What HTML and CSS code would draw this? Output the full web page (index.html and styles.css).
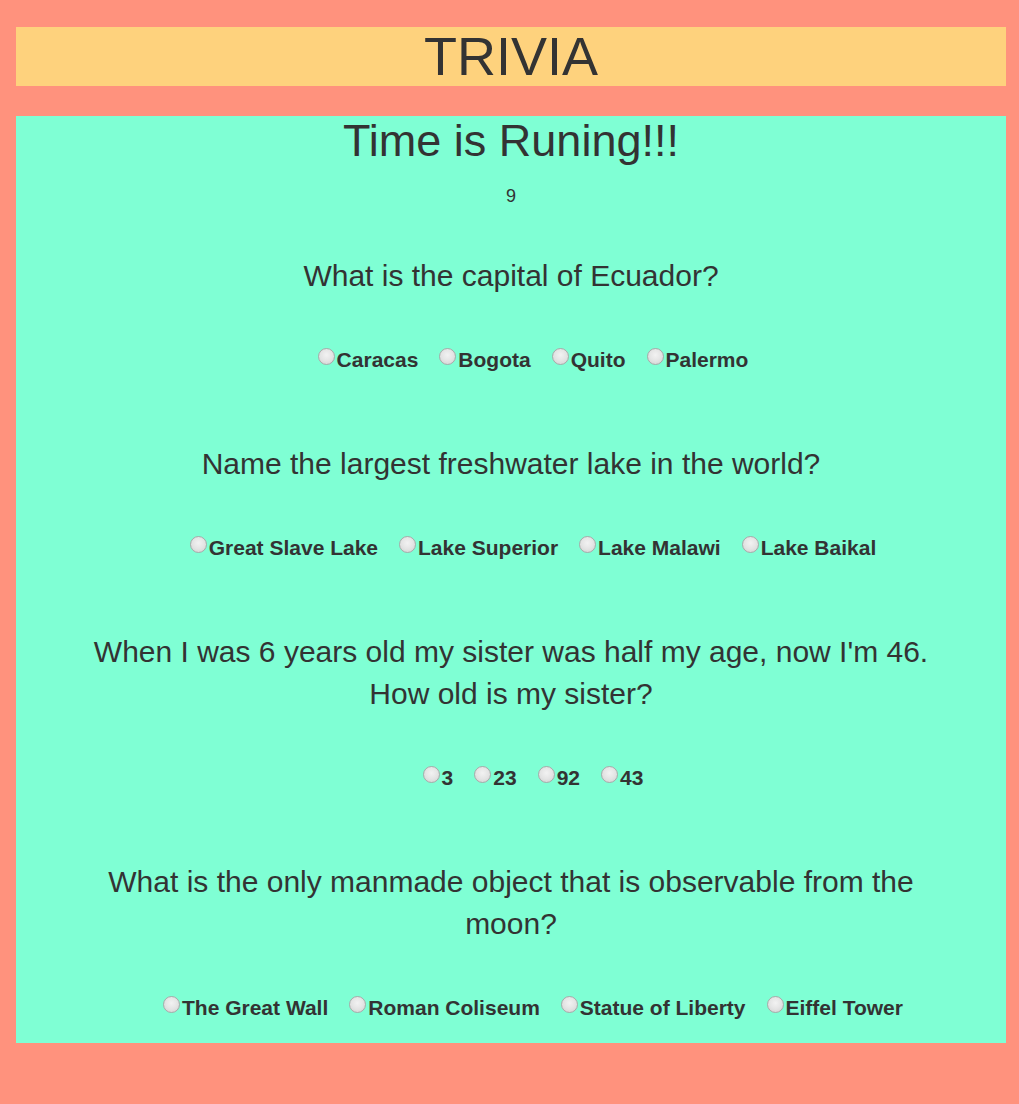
FILE: index.html
```html
<!DOCTYPE html>
<html lang="en">
<head>
<meta charset="utf-8">
<title>Trivia</title>
<link rel="stylesheet" href="styles.css">
</head>
<body>
<header class="banner">TRIVIA</header>
<main class="game">
  <h2 class="game-title">Time is Runing!!!</h2>
  <div class="timer">9</div>

  <section class="question">
    <p class="question-text">What is the capital of Ecuador?</p>
    <div class="options">
      <label class="option"><input type="radio" name="q1"><span>Caracas</span></label>
      <label class="option"><input type="radio" name="q1"><span>Bogota</span></label>
      <label class="option"><input type="radio" name="q1"><span>Quito</span></label>
      <label class="option"><input type="radio" name="q1"><span>Palermo</span></label>
    </div>
  </section>

  <section class="question">
    <p class="question-text">Name the largest freshwater lake in the world?</p>
    <div class="options">
      <label class="option"><input type="radio" name="q2"><span>Great Slave Lake</span></label>
      <label class="option"><input type="radio" name="q2"><span>Lake Superior</span></label>
      <label class="option"><input type="radio" name="q2"><span>Lake Malawi</span></label>
      <label class="option"><input type="radio" name="q2"><span>Lake Baikal</span></label>
    </div>
  </section>

  <section class="question">
    <p class="question-text">When I was 6 years old my sister was half my age, now I'm 46. How old is my sister?</p>
    <div class="options">
      <label class="option"><input type="radio" name="q3"><span>3</span></label>
      <label class="option"><input type="radio" name="q3"><span>23</span></label>
      <label class="option"><input type="radio" name="q3"><span>92</span></label>
      <label class="option"><input type="radio" name="q3"><span>43</span></label>
    </div>
  </section>

  <section class="question">
    <p class="question-text">What is the only manmade object that is observable from the moon?</p>
    <div class="options">
      <label class="option"><input type="radio" name="q4"><span>The Great Wall</span></label>
      <label class="option"><input type="radio" name="q4"><span>Roman Coliseum</span></label>
      <label class="option"><input type="radio" name="q4"><span>Statue of Liberty</span></label>
      <label class="option"><input type="radio" name="q4"><span>Eiffel Tower</span></label>
    </div>
  </section>
</main>
</body>
</html>
```

FILE: styles.css
```css
html {
  background: #ff927d;
}

body {
  margin: 0;
  padding: 27px 13px 0 16px;
  font-family: "Liberation Sans", Arial, sans-serif;
  color: #333;
}

.banner {
  background: #fed27d;
  height: 59px;
  line-height: 59px;
  font-size: 54px;
  text-align: center;
  color: #333;
}

.game {
  margin-top: 30px;
  background: #7fffd4;
  padding: 0 0 23px;
  text-align: center;
}

.game-title {
  margin: 0;
  font-size: 45px;
  line-height: 50px;
  font-weight: normal;
}

.timer {
  margin-top: 19px;
  font-size: 18px;
  line-height: 22px;
}

.question {
  margin-top: 71px;
}

.timer + .question {
  margin-top: 48px;
}

.question-text {
  margin: 0 auto;
  max-width: 870px;
  font-size: 30px;
  line-height: 42px;
}

.options {
  margin-top: 51px;
  padding-left: 44px;
  display: flex;
  justify-content: center;
  gap: 21px;
  font-size: 21px;
  line-height: 24px;
  font-weight: bold;
}

.option {
  display: inline-flex;
  align-items: flex-start;
}

.option input {
  appearance: none;
  -webkit-appearance: none;
  width: 17px;
  height: 17px;
  margin: 0 2px 0 0;
  border: 1px solid #a9a9a9;
  border-radius: 50%;
  background: radial-gradient(circle at 50% 40%, #f2f2f2 0%, #e4e4e4 50%, #cfcfcf 100%);
  box-sizing: border-box;
  flex: none;
}
```
